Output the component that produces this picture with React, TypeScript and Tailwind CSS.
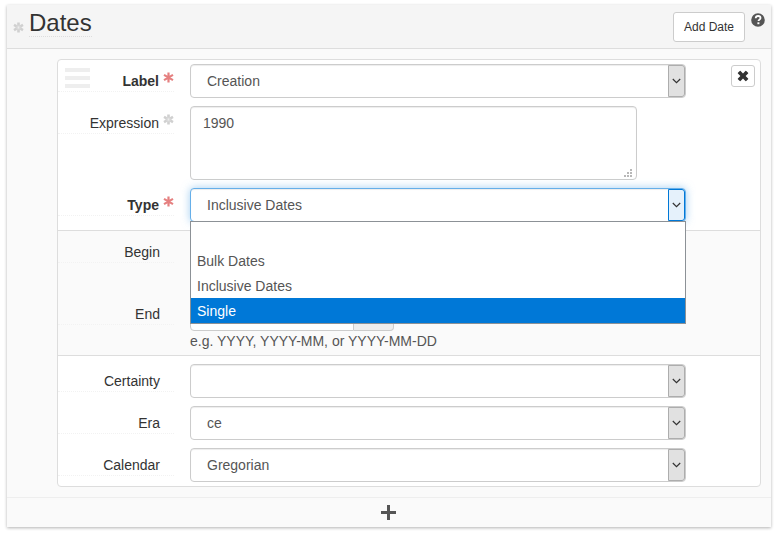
import { useState, type ReactNode } from "react";

type Mark = "required" | "optional";

function Asterisk({ kind }: { kind: Mark }) {
  if (kind === "required") {
    return (
      <svg aria-hidden="true" viewBox="0 0 11 11" className="h-[11px] w-[11px]">
        <path
          d="M5.5 .4v10.2M1 2.9l9 5.2M10 2.9L1 8.1"
          stroke="#e58080"
          strokeWidth="2.2"
          fill="none"
        />
      </svg>
    );
  }
  return (
    <svg aria-hidden="true" viewBox="0 0 11 11" className="h-[11px] w-[11px]">
      <path
        d="M5.5 .4v10.2M1 2.9l9 5.2M10 2.9L1 8.1"
        stroke="#d0d0d0"
        strokeWidth="2.6"
        fill="none"
      />
      <circle cx="5.5" cy="5.5" r="2.8" fill="#d6d6d6" />
      <path d="M5.5 4.2v2.6M4.4 4.9l2.2 1.2M6.6 4.9L4.4 6.1" stroke="#ececec" strokeWidth=".7" />
    </svg>
  );
}

function Row({
  id,
  label,
  mark,
  handle,
  action,
  children,
}: {
  id: string;
  label: string;
  mark?: Mark;
  handle?: boolean;
  action?: ReactNode;
  children: ReactNode;
}) {
  return (
    <div className="grid grid-cols-[132px_minmax(0,1fr)_74px] items-start">
      <div className="relative mr-4 flex justify-end border-b border-dotted border-[#f2f2f2] pt-[7px]">
        {handle && (
          <button
            type="button"
            aria-label="Reorder"
            className="absolute left-[7px] top-1 flex w-[25px] flex-col gap-1"
          >
            <span className="h-1 bg-[#eeeeee]" />
            <span className="h-1 bg-[#eeeeee]" />
            <span className="h-1 bg-[#eeeeee]" />
          </button>
        )}
        <label
          htmlFor={id}
          className={mark === "required" ? "font-bold" : undefined}
        >
          {label}
        </label>
        <span className={mark ? "w-[15px] pl-1 pt-px" : "w-[14px]"}>
          {mark && <Asterisk kind={mark} />}
        </span>
      </div>
      <div>{children}</div>
      <div className="flex justify-end pr-[5px] pt-px">{action}</div>
    </div>
  );
}

function Select({
  id,
  options,
  initial,
  open,
}: {
  id: string;
  options: string[];
  initial: string;
  open?: boolean;
}) {
  const [value, setValue] = useState(initial);
  return (
    <div className="relative">
      <select
        id={id}
        value={value}
        onChange={(e) => setValue(e.target.value)}
        className={
          "block h-[34px] w-full appearance-none rounded border bg-white pl-4 pr-6 text-[#555555] outline-none " +
          (open
            ? "border-[#66afe9] shadow-[inset_0_1px_1px_rgba(0,0,0,0.075),0_0_8px_rgba(102,175,233,0.6)]"
            : "border-[#cccccc] shadow-[inset_0_1px_1px_rgba(0,0,0,0.075)]")
        }
      >
        {options.map((o) => (
          <option key={o} value={o}>
            {o}
          </option>
        ))}
      </select>
      <span
        className={
          "pointer-events-none absolute right-px top-px flex h-8 w-[17px] items-center justify-center rounded-r-[3px] border " +
          (open
            ? "border-[#0078d7] bg-[#e5f1fb]"
            : "border-[#adadad] bg-[#e1e1e1]")
        }
      >
        <svg aria-hidden="true" viewBox="0 0 9 6" className="h-[6px] w-[9px]">
          <path d="M.8 1l3.7 3.7L8.200 1" fill="none" stroke="#333333" strokeWidth="1.2" />
        </svg>
      </span>
      {open && (
        <ul
          role="listbox"
          aria-label="Type options"
          className="absolute inset-x-0 top-[33px] z-10 border border-[#8c9196] bg-white pt-px leading-[26px] text-[#555555]"
        >
          {options.map((o) => (
            <li
              key={o}
              role="option"
              aria-selected={o === "Single"}
              className={
                o === "Single"
                  ? "h-[25px] bg-[#0078d7] px-[6px] text-white"
                  : "h-[25px] px-[6px]"
              }
            >
              {o}
            </li>
          ))}
        </ul>
      )}
    </div>
  );
}

function DateInput({ id, hint }: { id: string; hint?: string }) {
  return (
    <div className="min-h-[54px]">
      <div className="flex h-[34px] w-[204px]">
        <input
          id={id}
          type="text"
          className="min-w-0 flex-1 rounded-l border border-[#cccccc] bg-white px-3 text-[#555555]"
        />
        <button
          type="button"
          aria-label="Pick a date"
          className="w-10 rounded-r border border-l-0 border-[#cccccc] bg-[#eeeeee]"
        />
      </div>
      {hint && <p className="text-[#555555]">{hint}</p>}
    </div>
  );
}

export default function App() {
  return (
    <div className="bg-white px-[7px] py-[5px] font-['Liberation_Sans',Arial,sans-serif] text-sm leading-5 text-[#333333]">
      <section className="bg-[#fafafa] shadow-[0_1px_3px_rgba(0,0,0,0.3)]">
        <header className="flex h-11 items-start border-b border-[#dddddd] bg-[#f5f5f5] pl-[6px] pr-[6px]">
          <span className="pt-[17px]">
            <Asterisk kind="optional" />
          </span>
          <h2 className="ml-[5px] mt-1 border-b border-dotted border-[#dddddd] text-2xl leading-[27px]">
            Dates
          </h2>
          <button
            type="button"
            className="ml-auto mt-[7px] h-[30px] rounded-[3px] border border-[#cccccc] bg-white px-[10px] text-xs"
          >
            Add Date
          </button>
          <button type="button" aria-label="Help" className="ml-[6px] mt-2">
            <svg aria-hidden="true" viewBox="0 0 14 14" className="h-[14px] w-[14px]">
              <circle cx="7" cy="7" r="6.8" fill="#555555" />
              <path
                d="M4.7 5.2C4.8 3.7 5.8 3 7.1 3c1.4 0 2.4.8 2.4 2 0 1.6-2 1.6-2 3.1"
                fill="none"
                stroke="#ffffff"
                strokeWidth="1.8"
              />
              <path d="M6.4 9.3h2v1.9h-2z" fill="#ffffff" />
            </svg>
          </button>
        </header>

        <div className="pb-[10px] pl-[50px] pr-[10px] pt-[10px]">
          <div className="flex flex-col gap-2 rounded border border-[#dddddd] bg-white pb-1 pt-1">
            <Row
              id="label"
              label="Label"
              mark="required"
              handle
              action={
                <button
                  type="button"
                  aria-label="Remove date"
                  className="flex h-[22px] w-6 items-center justify-center rounded-[3px] border border-[#cccccc] bg-white"
                >
                  <svg aria-hidden="true" viewBox="0 0 12 12" className="h-3 w-3">
                    <path
                      d="M.9 2.8L2.8.9q.4-.3.8 0L6 3.4 8.4.9q.4-.3.8 0l1.9 1.9q.3.4 0 .8L8.6 6l2.500 2.4q.3.4 0 .8l-1.9 1.9q-.4.3-.8 0L6 8.6l-2.4 2.5q-.4.3-.8 0L.9 9.2q-.3-.4 0-.8L3.4 6 .9 3.6q-.3-.4 0-.8z"
                      fill="#333333"
                    />
                  </svg>
                </button>
              }
            >
              <Select id="label" options={["Creation"]} initial="Creation" />
            </Row>

            <Row id="expression" label="Expression" mark="optional">
              <div className="relative mr-[49px]">
                <textarea
                  id="expression"
                  defaultValue="1990"
                  className="block h-[74px] w-full resize-none rounded border border-[#cccccc] bg-white px-3 py-[6px] text-[#555555] shadow-[inset_0_1px_1px_rgba(0,0,0,0.075)]"
                />
                <svg
                  aria-hidden="true"
                  viewBox="0 0 8 8"
                  className="pointer-events-none absolute bottom-[3px] right-[5px] h-2 w-2"
                >
                  <path
                    d="M6 0h2v2H6zM3 3h2v2H3zM6 3h2v2H6zM0 6h2v2H0zM3 6h2v2H3zM6 6h2v2H6z"
                    fill="#b8b8b8"
                  />
                </svg>
              </div>
            </Row>

            <Row id="type" label="Type" mark="required">
              <Select
                id="type"
                options={["", "Bulk Dates", "Inclusive Dates", "Single"]}
                initial="Inclusive Dates"
                open
              />
            </Row>

            <div className="flex flex-col gap-2 border-y border-[#dddddd] bg-[#fafafa] py-1">
              <Row id="begin" label="Begin">
                <DateInput id="begin" />
              </Row>
              <Row id="end" label="End">
                <DateInput id="end" hint="e.g. YYYY, YYYY-MM, or YYYY-MM-DD" />
              </Row>
            </div>

            <Row id="certainty" label="Certainty">
              <Select id="certainty" options={[""]} initial="" />
            </Row>
            <Row id="era" label="Era">
              <Select id="era" options={["ce"]} initial="ce" />
            </Row>
            <Row id="calendar" label="Calendar">
              <Select id="calendar" options={["Gregorian"]} initial="Gregorian" />
            </Row>
          </div>
        </div>

        <footer className="border-t border-[#eeeeee]">
          <button
            type="button"
            aria-label="Add another date"
            className="flex h-[29px] w-full items-center justify-center pr-px"
          >
            <svg aria-hidden="true" viewBox="0 0 15 15" className="h-[15px] w-[15px]">
              <path d="M6 0h3v6h6v3H9v6H6V9H0V6h6z" fill="#555555" />
            </svg>
          </button>
        </footer>
      </section>
    </div>
  );
}
